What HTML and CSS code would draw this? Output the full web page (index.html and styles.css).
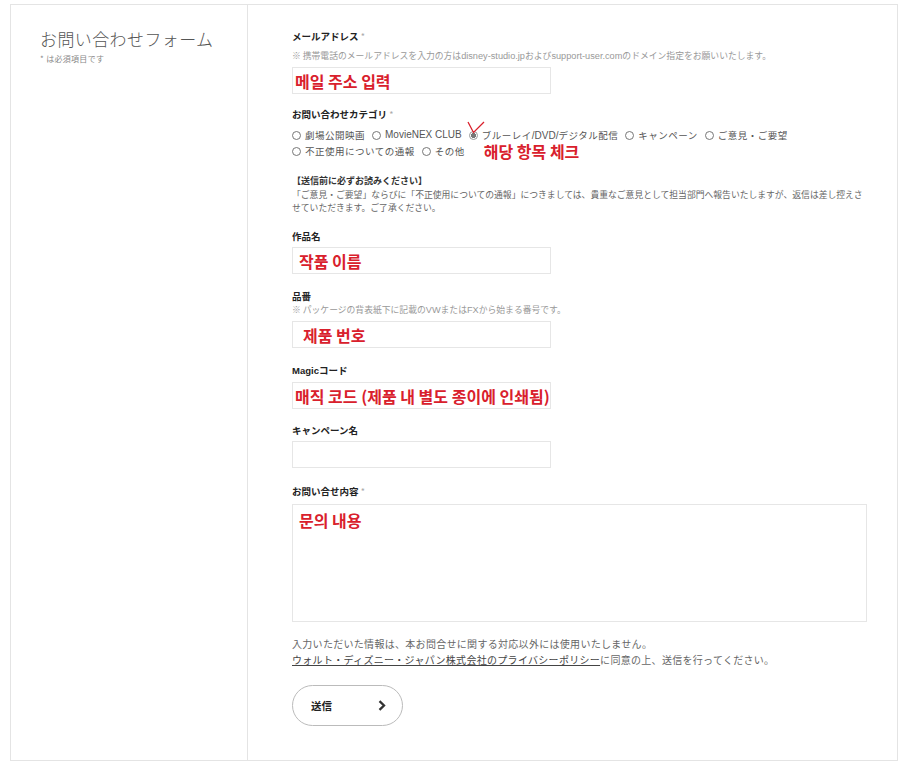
FILE: index.html
```html
<!DOCTYPE html>
<html lang="ja">
<head>
    <meta charset="UTF-8">
    <title>お問い合わせフォーム</title>
    <link rel="stylesheet" href="styles.css">
</head>
<body>

    <div class="page">
        <aside class="side">
            <h1 class="side-title">お問い合わせフォーム</h1>
            <p class="side-note">* は必須項目です</p>
        </aside>

        <main class="form">

            <div class="field">
                <div class="label">メールアドレス <span class="req">*</span></div>
                <div class="note note-top">※ 携帯電話のメールアドレスを入力の方は<span class="latin">disney-studio.jp</span>および<span class="latin">support-user.com</span>のドメイン指定をお願いいたします。</div>
                <div class="input"><span class="memo">메일 주소 입력</span></div>
            </div>

            <div class="field field-category">
                <div class="label">お問い合わせカテゴリ <span class="req">*</span></div>
                <div class="radios">
                    <div class="radio-row">
                        <span class="radio"><i></i><span>劇場公開映画</span></span>
                        <span class="radio"><i></i><span class="latin">MovieNEX CLUB</span></span>
                        <span class="radio checked">
                            <svg class="check" width="18" height="13" viewBox="0 0 18 13"><path d="M1 1 L6.5 11.5 L17 1" fill="none" stroke="#d9202c" stroke-width="1.3"/></svg>
                            <i></i><span>ブルーレイ<span class="latin">/DVD/</span>デジタル配信</span></span>
                        <span class="radio"><i></i><span>キャンペーン</span></span>
                        <span class="radio"><i></i><span>ご意見・ご要望</span></span>
                    </div>
                    <div class="radio-row">
                        <span class="radio"><i></i><span>不正使用についての通報</span></span>
                        <span class="radio"><i></i><span>その他</span></span>
                        <span class="memo memo-inline">해당 항목 체크</span>
                    </div>
                </div>
            </div>

            <div class="notice">
                <div class="notice-head">【送信前に必ずお読みください】</div>
                <p class="notice-text">「ご意見・ご要望」ならびに「不正使用についての通報」につきましては、貴重なご意見として担当部門へ報告いたしますが、返信は差し控えさせていただきます。ご了承ください。</p>
            </div>

            <div class="field">
                <div class="label">作品名</div>
                <div class="input"><span class="memo memo-in">작품 이름</span></div>
            </div>

            <div class="field">
                <div class="label">品番</div>
                <div class="note">※ パッケージの背表紙下に記載の<span class="latin">VW</span>または<span class="latin">FX</span>から始まる番号です。</div>
                <div class="input"><span class="memo memo-in2">제품 번호</span></div>
            </div>

            <div class="field">
                <div class="label"><span class="latin">Magic</span>コード</div>
                <div class="input input-gap"><span class="memo">매직 코드 (제품 내 별도 종이에 인쇄됨)</span></div>
            </div>

            <div class="field field-tight">
                <div class="label">キャンペーン名</div>
                <div class="input"></div>
            </div>

            <div class="field field-loose">
                <div class="label">お問い合せ内容 <span class="req">*</span></div>
                <div class="textarea"><span class="memo memo-in">문의 내용</span></div>
            </div>

            <div class="agree">
                <p>入力いただいた情報は、本お問合せに関する対応以外には使用いたしません。</p>
                <p><a class="policy" href="#">ウォルト・ディズニー・ジャパン株式会社のプライバシーポリシー</a>に同意の上、送信を行ってください。</p>
            </div>

            <button class="submit" type="button">
                <span>送信</span>
                <svg width="8" height="11" viewBox="0 0 8 11"><path d="M1.5 1.2 L6 5.5 L1.5 9.8" fill="none" stroke="#333" stroke-width="2.3"/></svg>
            </button>

        </main>
    </div>

</body>
</html>
```

FILE: styles.css
```css
html,body,h1,p{
    margin: 0;
    padding: 0;
}

body{
    background: #fff;
    font-family: "Noto Sans CJK JP", "Liberation Sans", sans-serif;
    color: #333;
}

.latin{
    font-family: "Liberation Sans", "Noto Sans CJK JP", sans-serif;
}

.page{
    box-sizing: border-box;
    width: 888px;
    height: 757px;
    margin: 4px 0 0 10px;
    border: 1px solid #e4e4e4;
    display: grid;
    grid-template-columns: 236px 1fr;
}

/* left column */

.side{
    padding: 23px 0 0 29px;
}

.side-title{
    font-size: 17px;
    line-height: 22px;
    font-weight: 300;
    letter-spacing: 0.4px;
    color: #555;
}

.side-note{
    margin-top: 3px;
    font-size: 8px;
    line-height: 12px;
    color: #888;
    letter-spacing: 0.3px;
}

/* right column */

.form{
    border-left: 1px solid #e4e4e4;
    padding: 24px 30px 0 44px;
}

.field + .field,
.notice + .field{
    margin-top: 15px;
}

.field-category{
    margin-top: 13px !important;
}

.field-tight{
    margin-top: 14px !important;
}

.field-loose{
    margin-top: 16px !important;
}

.label{
    font-size: 9.5px;
    line-height: 14px;
    height: 14px;
    font-weight: 700;
    color: #222;
}

.label span,
.note span,
.notice-text span,
.agree a{
    line-height: 0;
}

.label .latin{
    font-weight: 700;
}

.req{
    font-weight: 400;
    color: #aaa;
    font-size: 9px;
}

.note{
    font-size: 8.8px;
    line-height: 14px;
    height: 14px;
    color: #999;
    white-space: nowrap;
}

.note-top{
    margin-top: 6px;
}

.note .latin{
    font-size: 9.2px;
}

.input{
    box-sizing: border-box;
    width: 259px;
    height: 27px;
    margin-top: 4px;
    border: 1px solid #e6e6e6;
    display: flex;
    align-items: center;
    padding-left: 2px;
    white-space: nowrap;
}

.input-gap{
    margin-top: 5px;
}

.textarea{
    box-sizing: border-box;
    height: 118px;
    margin-top: 6px;
    border: 1px solid #e6e6e6;
    padding: 3px 0 0 2px;
}

.memo{
    font-family: "Noto Sans CJK KR", sans-serif;
    font-size: 16px;
    line-height: 16px;
    font-weight: 700;
    color: #d9202c;
}

.memo-in{
    padding-left: 4px;
}

.memo-in2{
    padding-left: 8px;
}

/* radios */

.radios{
    margin-top: 6px;
}

.radio-row{
    display: flex;
    align-items: center;
    gap: 7px;
    height: 16px;
}

.radio{
    position: relative;
    display: inline-flex;
    align-items: center;
    gap: 4px;
    font-size: 9.5px;
    line-height: 16px;
    letter-spacing: 0.5px;
    color: #555;
    white-space: nowrap;
}

.radio .latin{
    font-size: 10px;
    letter-spacing: 0;
}

.radio i{
    box-sizing: border-box;
    width: 9px;
    height: 9px;
    border: 1px solid #777;
    border-radius: 50%;
    display: inline-block;
    flex: none;
}

.radio.checked i{
    border-color: #999;
    background: radial-gradient(circle, #777 0 2.3px, #fff 2.8px);
}

.check{
    position: absolute;
    left: -2px;
    top: -6px;
}

.memo-inline{
    margin-left: 12px;
}

/* notice */

.notice{
    margin-top: 15px;
}

.notice-head{
    font-size: 9px;
    line-height: 14px;
    font-weight: 700;
    color: #333;
}

.notice-text{
    font-size: 8.8px;
    line-height: 13px;
    letter-spacing: 0;
    color: #666;
}

/* footer */

.agree{
    margin-top: 14px;
    font-size: 10px;
    line-height: 16px;
    letter-spacing: 0.3px;
    color: #666;
}

.agree p{
    height: 16px;
}

.policy{
    color: #444;
    text-decoration: underline;
}

.submit{
    box-sizing: border-box;
    width: 111px;
    height: 41px;
    margin-top: 17px;
    border: 1px solid #bbb;
    border-radius: 21px;
    background: #fff;
    display: flex;
    align-items: center;
    justify-content: space-between;
    padding: 0 16px 0 18px;
    font-family: "Noto Sans CJK JP", sans-serif;
    font-size: 10.5px;
    font-weight: 700;
    color: #222;
}
```
